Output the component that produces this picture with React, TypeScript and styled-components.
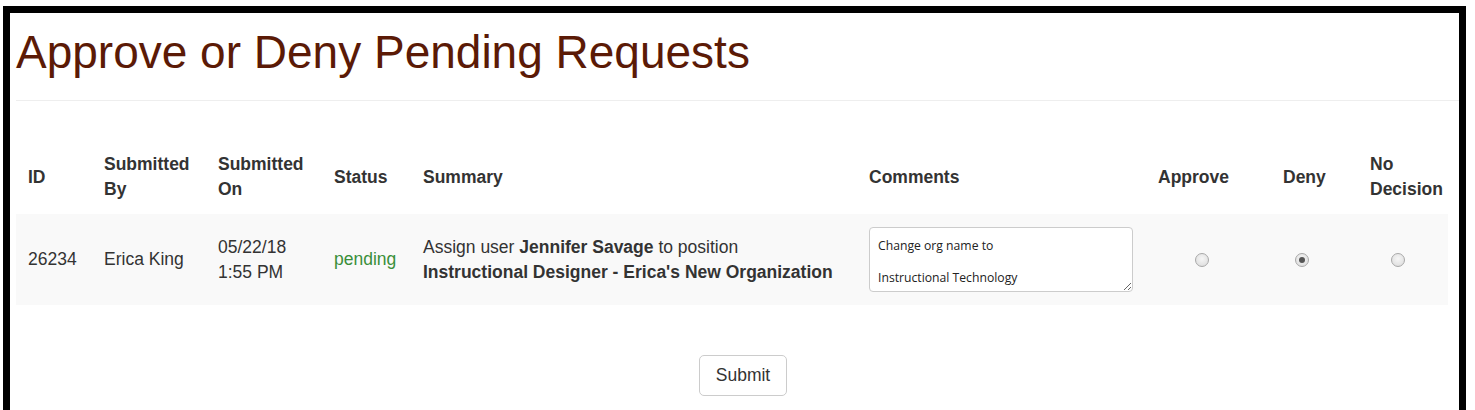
import React from "react";
import styled, { createGlobalStyle } from "styled-components";

const Global = createGlobalStyle`
  html, body { margin: 0; padding: 0; background: #fff; overflow: hidden; }
  body { font-family: "Liberation Sans", Arial, sans-serif; color: #333; }
  * { box-sizing: border-box; }
`;

const Frame = styled.div`
  margin: 6px 9px 0 3px;
  height: 411px;
  border: 7px solid #000;
  background: #fff;
`;

const PageHeader = styled.div`
  margin: 0 0 0 6px;
  border-bottom: 1px solid #eee;
  padding: 14px 0 23px;
`;

const Title = styled.h1`
  margin: 0;
  font-family: "Liberation Sans", Arial, sans-serif;
  font-weight: 400;
  font-size: 46px;
  line-height: 50px;
  color: #5b1a06;
`;

const Table = styled.table`
  margin: 41px 0 0 6px;
  width: 1432px;
  table-layout: fixed;
  border-collapse: collapse;
  font-size: 17.5px;
  line-height: 25px;
`;

const Th = styled.th`
  text-align: left;
  vertical-align: middle;
  font-weight: 700;
  padding: 10px 12px 12px;
  color: #333;
`;

const Row = styled.tr`
  background: #f9f9f9;
`;

const Td = styled.td<{ $pad?: number }>`
  vertical-align: middle;
  padding: 10px 12px 10px ${(p) => p.$pad ?? 12}px;
  color: #333;
`;

const Pending = styled.span`
  color: #3a8f3a;
`;

const Strong = styled.b`
  font-weight: 700;
  white-space: nowrap;
`;

const Comment = styled.textarea`
  display: block;
  margin: 3px 0;
  width: 264px;
  height: 65px;
  padding: 2px 8px;
  border: 1px solid #ccc;
  border-radius: 4px;
  font-family: "Open Sans", "Liberation Sans", sans-serif;
  font-size: 12.2px;
  line-height: 32px;
  color: #222;
  background: #fff;
  overflow: hidden;
`;

const Radio = styled.input`
  appearance: none;
  -webkit-appearance: none;
  display: block;
  margin: 0;
  width: 14px;
  height: 14px;
  border-radius: 50%;
  border: 1px solid #a9a9a9;
  background: radial-gradient(circle at 50% 40%, #f6f6f6 0%, #e2e2e2 70%, #d6d6d6 100%);
  position: relative;
  &:checked::after {
    content: "";
    position: absolute;
    left: 3px;
    top: 3px;
    width: 6px;
    height: 6px;
    border-radius: 50%;
    background: #555;
  }
`;

const Actions = styled.div`
  display: flex;
  justify-content: center;
  padding-left: 17px;
  margin-top: 50px;
`;

const Button = styled.button`
  width: 88px;
  height: 41px;
  border: 1px solid #ccc;
  border-radius: 5px;
  background: #fff;
  font-family: "Liberation Sans", Arial, sans-serif;
  font-size: 17.5px;
  color: #333;
  padding: 0;
`;

const cols = [76, 114, 116, 89, 446, 289, 125, 87, 90];

export default function App() {
  return (
    <>
      <Global />
      <Frame>
        <PageHeader>
          <Title>Approve or Deny Pending Requests</Title>
        </PageHeader>
        <Table>
          <colgroup>
            {cols.map((w, i) => (
              <col key={i} style={{ width: w }} />
            ))}
          </colgroup>
          <thead>
            <tr>
              <Th>ID</Th>
              <Th>Submitted By</Th>
              <Th>Submitted On</Th>
              <Th>Status</Th>
              <Th>Summary</Th>
              <Th>Comments</Th>
              <Th>Approve</Th>
              <Th>Deny</Th>
              <Th>No Decision</Th>
            </tr>
          </thead>
          <tbody>
            <Row>
              <Td>26234</Td>
              <Td>Erica King</Td>
              <Td>
                05/22/18
                <br />
                1:55 PM
              </Td>
              <Td>
                <Pending>pending</Pending>
              </Td>
              <Td>
                Assign user <Strong>Jennifer Savage</Strong> to position{" "}
                <Strong>Instructional Designer - Erica's New Organization</Strong>
              </Td>
              <Td>
                <Comment defaultValue={"Change org name to\nInstructional Technology"} />
              </Td>
              <Td $pad={49}>
                <Radio type="radio" name="d26234" value="approve" />
              </Td>
              <Td $pad={24}>
                <Radio type="radio" name="d26234" value="deny" defaultChecked />
              </Td>
              <Td $pad={33}>
                <Radio type="radio" name="d26234" value="none" />
              </Td>
            </Row>
          </tbody>
        </Table>
        <Actions>
          <Button type="button">Submit</Button>
        </Actions>
      </Frame>
    </>
  );
}
